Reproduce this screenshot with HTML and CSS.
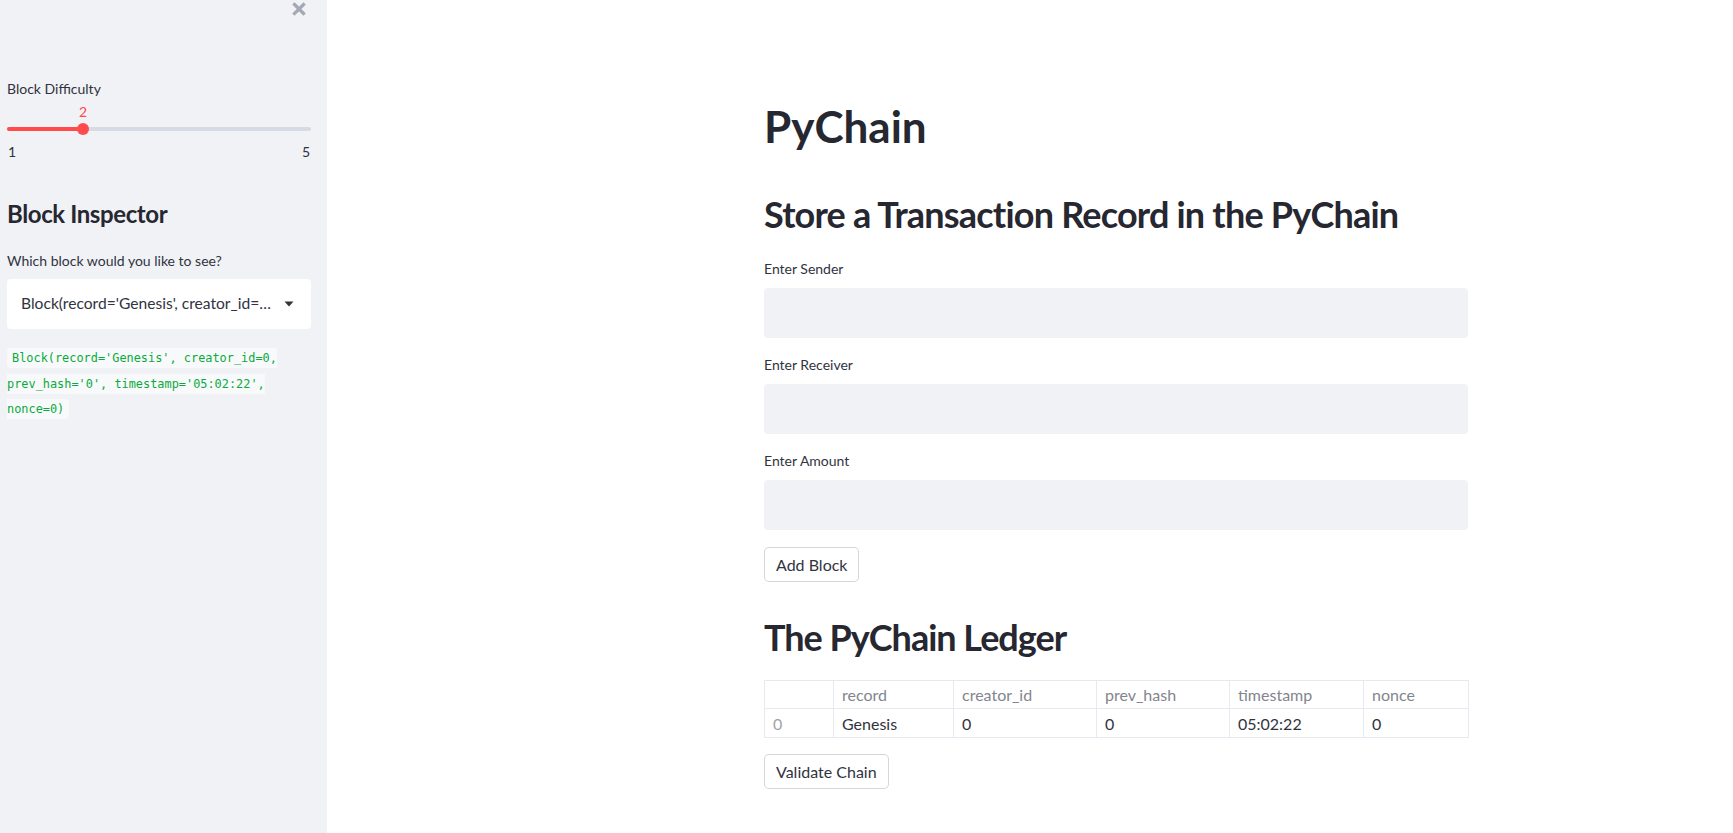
FILE: index.html
```html
<!DOCTYPE html>
<html lang="en">
<head>
<meta charset="utf-8">
<title>PyChain</title>
<link rel="stylesheet" href="styles.css">
</head>
<body>
<div class="app">
  <aside class="sidebar">
    <div class="sidebar-top">
      <button class="close-btn" aria-label="Close sidebar">
        <svg width="14" height="14" viewBox="0 0 14 14"><path d="M2.5 2.5 L11.5 11.5 M11.5 2.5 L2.5 11.5" stroke="#a3a8b4" stroke-width="3.2" stroke-linecap="square" fill="none"/></svg>
      </button>
    </div>

    <div class="side-label label-difficulty">Block Difficulty</div>
    <div class="slider">
      <div class="slider-value" style="left: 25%">2</div>
      <div class="slider-track">
        <div class="slider-fill" style="width: 25%"></div>
      </div>
      <div class="slider-thumb" style="left: 25%"></div>
    </div>
    <div class="slider-ticks"><span>1</span><span>5</span></div>

    <h2 class="side-heading">Block Inspector</h2>
    <div class="side-label">Which block would you like to see?</div>
    <div class="select">
      <span class="select-text">Block(record='Genesis', creator_id=…</span>
      <svg class="select-arrow" width="10" height="6" viewBox="0 0 10 6"><path d="M0.5 0.5 L9.5 0.5 L5 5.5 Z" fill="#31333f"/></svg>
    </div>
    <p class="code-line"><code>Block(record='Genesis', creator_id=0, prev_hash='0', timestamp='05:02:22', nonce=0)</code></p>
  </aside>

  <main class="main">
    <div class="content">
      <h1 class="title">PyChain</h1>
      <h2 class="section">Store a Transaction Record in the PyChain</h2>
      <div class="form">
        <div class="field">
          <label class="field-label">Enter Sender</label>
          <input class="text-input" type="text">
        </div>
        <div class="field">
          <label class="field-label">Enter Receiver</label>
          <input class="text-input" type="text">
        </div>
        <div class="field">
          <label class="field-label">Enter Amount</label>
          <input class="text-input" type="text">
        </div>
        <div><button class="btn">Add Block</button></div>
      </div>

      <h2 class="section ledger">The PyChain Ledger</h2>
      <table class="ledger-table">
        <colgroup>
          <col class="c-idx"><col class="c-rec"><col class="c-cre"><col class="c-prev"><col class="c-ts"><col class="c-non">
        </colgroup>
        <thead>
          <tr><th></th><th>record</th><th>creator_id</th><th>prev_hash</th><th>timestamp</th><th>nonce</th></tr>
        </thead>
        <tbody>
          <tr><th class="idx">0</th><td>Genesis</td><td>0</td><td>0</td><td>05:02:22</td><td>0</td></tr>
        </tbody>
      </table>
      <div class="validate"><button class="btn">Validate Chain</button></div>
    </div>
  </main>
</div>
</body>
</html>
```

FILE: styles.css
```css
* { box-sizing: border-box; }

html, body {
  margin: 0;
  padding: 0;
  height: 100%;
}

body {
  font-family: Lato, "Noto Sans", sans-serif;
  color: #31333f;
  background: #ffffff;
}

.app {
  display: flex;
  height: 100vh;
  overflow: hidden;
}

/* ---------- Sidebar ---------- */
.sidebar {
  width: 327px;
  flex: 0 0 327px;
  background: #f0f2f6;
  padding: 0 16px 0 7px;
  display: flex;
  flex-direction: column;
}

.sidebar-top {
  display: flex;
  justify-content: flex-end;
  padding: 2px 5px 0 0;
}

.close-btn {
  border: 0;
  background: none;
  padding: 0;
  width: 14px;
  height: 14px;
  display: block;
  cursor: pointer;
}
.close-btn svg { display: block; }

.side-label {
  font-size: 14px;
  line-height: 20px;
  color: #31333f;
}

.label-difficulty {
  margin-top: 63px;
}

.slider {
  position: relative;
  height: 43px;
}

.slider-value {
  position: absolute;
  top: 3px;
  transform: translateX(-50%);
  font-size: 14px;
  line-height: 20px;
  color: #ff4b4b;
}

.slider-track {
  position: absolute;
  left: 0;
  right: 0;
  top: 28px;
  height: 4px;
  border-radius: 2px;
  background: #d6dae5;
}

.slider-fill {
  height: 100%;
  border-radius: 2px;
  background: #ff4b4b;
}

.slider-thumb {
  position: absolute;
  top: 24px;
  width: 12px;
  height: 12px;
  margin-left: -6px;
  border-radius: 50%;
  background: #ff4b4b;
}

.slider-ticks {
  display: flex;
  justify-content: space-between;
  font-size: 14px;
  line-height: 20px;
  color: #31333f;
  padding: 0 1px 0 1px;
}

.side-heading {
  margin: 37px 0 0 0;
  font-size: 24px;
  line-height: 30px;
  font-weight: 700;
  letter-spacing: -0.4px;
  color: #262730;
}

.side-heading + .side-label {
  margin-top: 22px;
}

.select {
  margin-top: 8px;
  height: 50px;
  background: #ffffff;
  border-radius: 4px;
  display: flex;
  align-items: center;
  padding: 0 17px 2px 14px;
}

.select-text {
  flex: 1;
  font-size: 15.6px;
  white-space: nowrap;
  overflow: hidden;
  color: #31333f;
}

.select-arrow {
  flex: 0 0 auto;
  margin-left: 8px;
  margin-top: 2px;
}

.code-line {
  margin: 17px 0 0 0;
  font-family: "DejaVu Sans Mono", "Liberation Mono", monospace;
  font-size: 11.9px;
  line-height: 25.5px;
  padding-right: 16px;
}

.code-line code {
  font-family: inherit;
  font-size: inherit;
  color: #09ab3b;
  background: #f8f9fb;
  padding: 3px 5px;
  border-radius: 4px;
}

/* ---------- Main ---------- */
.main {
  flex: 1;
  background: #ffffff;
  padding-left: 437px;
}

.content {
  width: 704px;
  padding-top: 100px;
  display: flex;
  flex-direction: column;
}

.title {
  margin: 0;
  font-size: 44px;
  line-height: 53px;
  font-weight: 700;
  color: #262730;
}

.section {
  margin: 40px 0 0 0;
  font-size: 36px;
  line-height: 43px;
  font-weight: 700;
  letter-spacing: -0.8px;
  color: #262730;
}

.form {
  margin-top: 23px;
  display: flex;
  flex-direction: column;
  gap: 17px;
}

.field {
  display: flex;
  flex-direction: column;
  gap: 9px;
}

.field-label {
  font-size: 14px;
  line-height: 20px;
  color: #31333f;
}

.text-input {
  height: 50px;
  border: 0;
  border-radius: 4px;
  background: #f0f2f6;
  padding: 0 12px;
  font: inherit;
  font-size: 16px;
  outline: none;
}

.btn {
  font-family: inherit;
  font-size: 16px;
  color: #31333f;
  background: #ffffff;
  border: 1px solid rgba(49, 51, 63, 0.2);
  border-radius: 5px;
  height: 35px;
  padding: 0 11px;
  cursor: pointer;
}

.section.ledger {
  margin-top: 34px;
  letter-spacing: -1px;
}

.ledger-table {
  margin-top: 21px;
  width: 704px;
  border-collapse: collapse;
  font-size: 16px;
  table-layout: fixed;
}

.c-idx { width: 69px; }
.c-rec { width: 120px; }
.c-cre { width: 143px; }
.c-prev { width: 133px; }
.c-ts { width: 134px; }
.c-non { width: 105px; }

.ledger-table th,
.ledger-table td {
  border: 1px solid #e6e9ef;
  text-align: left;
  padding: 4px 8px;
  line-height: 19px;
  font-weight: 400;
  white-space: nowrap;
}

.ledger-table thead th {
  color: #83858e;
}

.ledger-table tbody td {
  color: #31333f;
  padding-top: 5px;
}

.ledger-table tbody th.idx {
  color: #a0a2a9;
  padding-top: 5px;
}

.validate {
  margin-top: 16px;
}
```
